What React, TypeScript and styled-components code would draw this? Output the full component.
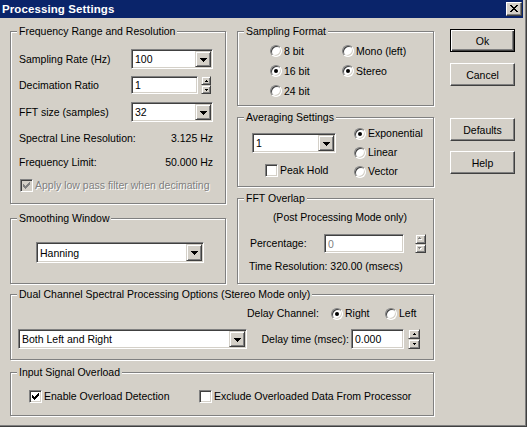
import React from "react";
import styled, { createGlobalStyle, css } from "styled-components";

const FACE = "#d4d0c8";
const SHADOW = "#808080";
const DARK = "#404040";
const LIGHT = "#ffffff";

const GlobalStyle = createGlobalStyle`
  html, body {
    margin: 0;
    padding: 0;
    background: ${FACE};
  }
  body {
    font-family: "Liberation Sans", Arial, sans-serif;
    font-size: 10.5px;
    color: #000;
  }
  * {
    box-sizing: border-box;
  }
`;

// classic bevels
const sunken = css`
  border: 1px solid;
  border-color: ${SHADOW} ${LIGHT} ${LIGHT} ${SHADOW};
  box-shadow: inset 1px 1px 0 ${DARK}, inset -1px -1px 0 ${FACE};
`;

const raised = css`
  border: 1px solid;
  border-color: ${FACE} ${DARK} ${DARK} ${FACE};
  box-shadow: inset 1px 1px 0 ${LIGHT}, inset -1px -1px 0 ${SHADOW};
`;

const Frame = styled.div`
  width: 527px;
  height: 427px;
  padding: 0 4px 4px 0;
  background: ${FACE};
  box-shadow: inset -1px -1px 0 ${DARK}, inset -2px -2px 0 ${SHADOW};
  overflow: hidden;
`;

const TitleBar = styled.div`
  height: 18px;
  background: #0a246a;
  color: #fff;
  display: flex;
  align-items: center;
  justify-content: space-between;
  padding: 0 1px 0 2px;
`;

const TitleText = styled.span`
  font-family: "Liberation Sans", Arial, sans-serif;
  font-weight: bold;
  font-size: 11.5px;
  letter-spacing: 0.1px;
`;

const CloseButton = styled.div`
  width: 16px;
  height: 14px;
  background: ${FACE};
  border: 1px solid;
  border-color: ${LIGHT} ${DARK} ${DARK} ${LIGHT};
  box-shadow: inset -1px -1px 0 ${SHADOW};
  display: flex;
  align-items: center;
  justify-content: center;
  padding: 0 1px 1px 0;
`;

const Body = styled.div`
  display: flex;
  gap: 16px;
  padding: 11px 0 0 10px;
`;

const GroupsArea = styled.div`
  width: 424px;
  display: flex;
  flex-direction: column;
  padding-top: 2px;
`;

const TopRow = styled.div`
  display: flex;
  gap: 11px;
`;

const Column = styled.div<{ $gap: number }>`
  display: flex;
  flex-direction: column;
  gap: ${(p) => p.$gap}px;
`;

const Group = styled.div<{ $w: number; $h: number; $mt?: number; $pad?: string }>`
  position: relative;
  width: ${(p) => p.$w}px;
  height: ${(p) => p.$h}px;
  margin-top: ${(p) => p.$mt ?? 0}px;
  padding: ${(p) => p.$pad ?? "0"};
  border: 1px solid ${SHADOW};
  box-shadow: inset 1px 1px 0 ${LIGHT}, 1px 1px 0 ${LIGHT};
`;

const Legend = styled.span`
  position: absolute;
  top: -7px;
  left: 6px;
  padding: 0 2px;
  line-height: 13px;
  background: ${FACE};
  white-space: nowrap;
`;

const FieldRow = styled.div<{ $mt: number }>`
  display: grid;
  grid-template-columns: 112px auto;
  align-items: center;
  margin-top: ${(p) => p.$mt}px;
`;

const Inline = styled.div<{ $gap?: number }>`
  display: flex;
  align-items: center;
  gap: ${(p) => p.$gap ?? 0}px;
`;

const ValueRow = styled.div<{ $mt: number }>`
  display: flex;
  justify-content: space-between;
  line-height: 14px;
  margin-top: ${(p) => p.$mt}px;
`;

const Spaced = styled.div<{ $mt?: number; $ml?: number }>`
  margin-top: ${(p) => p.$mt ?? 0}px;
  margin-left: ${(p) => p.$ml ?? 0}px;
`;

const Label = styled.span<{ $w?: number; $right?: boolean; $disabled?: boolean }>`
  white-space: nowrap;
  line-height: 13px;
  ${(p) => (p.$w ? `width: ${p.$w}px; flex: none;` : "")}
  ${(p) => (p.$right ? "text-align: right;" : "")}
  ${(p) =>
    p.$disabled ? `color: ${SHADOW}; text-shadow: 1px 1px 0 ${LIGHT};` : ""}
`;

/* ---------- pixel glyphs ---------- */

type Run = [number, number, number];

const Glyph: React.FC<{ runs: Run[]; w: number; h: number; color?: string; emboss?: boolean }> = ({
  runs,
  w,
  h,
  color = "#000",
  emboss,
}) => (
  <svg
    width={emboss ? w + 1 : w}
    height={emboss ? h + 1 : h}
    shapeRendering="crispEdges"
    style={{ display: "block" }}
  >
    {emboss &&
      runs.map(([x, y, len], i) => (
        <rect key={"s" + i} x={x + 1} y={y + 1} width={len} height={1} fill={LIGHT} />
      ))}
    {runs.map(([x, y, len], i) => (
      <rect key={i} x={x} y={y} width={len} height={1} fill={color} />
    ))}
  </svg>
);

const DOWN: Run[] = [
  [0, 0, 7],
  [1, 1, 5],
  [2, 2, 3],
  [3, 3, 1],
];
const SMALL_UP: Run[] = [
  [1, 0, 1],
  [0, 1, 3],
];
const SMALL_DOWN: Run[] = [
  [0, 0, 3],
  [1, 1, 1],
];
const CHECK: Run[] = [
  [6, 0, 1],
  [5, 1, 2],
  [0, 2, 1],
  [4, 2, 3],
  [0, 3, 2],
  [3, 3, 3],
  [0, 4, 5],
  [1, 5, 3],
  [2, 6, 1],
];
const CLOSE: Run[] = [
  [0, 0, 2],
  [6, 0, 2],
  [1, 1, 2],
  [5, 1, 2],
  [2, 2, 4],
  [3, 3, 2],
  [2, 4, 4],
  [1, 5, 2],
  [5, 5, 2],
  [0, 6, 2],
  [6, 6, 2],
];

/* ---------- controls ---------- */

const ComboFrame = styled.div<{ $w: number; $h: number }>`
  ${sunken};
  width: ${(p) => p.$w}px;
  height: ${(p) => p.$h}px;
  padding: 1px;
  background: #fff;
  display: flex;
  flex: none;
`;

const ComboText = styled.div`
  flex: 1;
  display: flex;
  align-items: center;
  padding-left: 2px;
  white-space: nowrap;
  overflow: hidden;
`;

const DropButton = styled.div`
  ${raised};
  width: 16px;
  background: ${FACE};
  display: flex;
  align-items: center;
  justify-content: center;
  padding-top: 1px;
`;

const ComboBox: React.FC<{ value: string; w: number; h?: number }> = ({ value, w, h = 20 }) => (
  <ComboFrame $w={w} $h={h}>
    <ComboText>{value}</ComboText>
    <DropButton>
      <Glyph runs={DOWN} w={7} h={4} />
    </DropButton>
  </ComboFrame>
);

const Edit = styled.div<{ $w: number; $h: number; $disabled?: boolean }>`
  ${sunken};
  width: ${(p) => p.$w}px;
  height: ${(p) => p.$h}px;
  flex: none;
  background: #fff;
  padding-left: 3px;
  display: flex;
  align-items: center;
  color: ${(p) => (p.$disabled ? SHADOW : "#000")};
`;

const SpinStack = styled.div<{ $w: number; $h: number; $ml: number }>`
  width: ${(p) => p.$w}px;
  height: ${(p) => p.$h}px;
  margin-left: ${(p) => p.$ml}px;
  display: flex;
  flex-direction: column;
  flex: none;
`;

const SpinHalf = styled.div`
  ${raised};
  flex: 1;
  background: ${FACE};
  display: flex;
  align-items: center;
  justify-content: center;
`;

const Spin: React.FC<{ w: number; h: number; ml: number; disabled?: boolean }> = ({ w, h, ml, disabled }) => (
  <SpinStack $w={w} $h={h} $ml={ml}>
    <SpinHalf>
      <Glyph runs={SMALL_UP} w={3} h={2} color={disabled ? SHADOW : "#000"} emboss={disabled} />
    </SpinHalf>
    <SpinHalf>
      <Glyph runs={SMALL_DOWN} w={3} h={2} color={disabled ? SHADOW : "#000"} emboss={disabled} />
    </SpinHalf>
  </SpinStack>
);

const Option = styled.div<{ $w?: number }>`
  display: flex;
  align-items: center;
  gap: 2px;
  white-space: nowrap;
  ${(p) => (p.$w ? `width: ${p.$w}px; flex: none;` : "")}
`;

const RadioCircle = styled.span<{ $checked: boolean }>`
  width: 12px;
  height: 12px;
  flex: none;
  border-radius: 50%;
  border: 1px solid;
  border-color: ${SHADOW} ${LIGHT} ${LIGHT} ${SHADOW};
  box-shadow: inset 1px 1px 0 ${DARK}, inset -1px -1px 0 ${FACE};
  background: #fff;
  display: flex;
  align-items: center;
  justify-content: center;

  &::after {
    content: "";
    display: ${(p) => (p.$checked ? "block" : "none")};
    width: 4px;
    height: 4px;
    border-radius: 50%;
    background: #000;
  }
`;

const Radio: React.FC<{ label: string; checked?: boolean; w?: number }> = ({ label, checked = false, w }) => (
  <Option $w={w}>
    <RadioCircle $checked={checked} />
    <Label>{label}</Label>
  </Option>
);

const CheckSquare = styled.span<{ $disabled?: boolean }>`
  ${sunken};
  width: 13px;
  height: 13px;
  flex: none;
  background: ${(p) => (p.$disabled ? FACE : "#fff")};
  display: flex;
  align-items: center;
  justify-content: center;
`;

const Check: React.FC<{ label: string; checked?: boolean; disabled?: boolean }> = ({
  label,
  checked,
  disabled,
}) => (
  <Option>
    <CheckSquare $disabled={disabled}>
      {checked && <Glyph runs={CHECK} w={7} h={7} color={disabled ? SHADOW : "#000"} />}
    </CheckSquare>
    <Label $disabled={disabled}>{label}</Label>
  </Option>
);

const PushButton = styled.button<{ $default?: boolean; $mt?: number }>`
  width: 65px;
  height: 23px;
  margin-top: ${(p) => p.$mt ?? 0}px;
  padding: 0;
  font: inherit;
  color: #000;
  background: ${FACE};
  ${(p) =>
    p.$default
      ? css`
          border: 1px solid #000;
          box-shadow: inset 1px 1px 0 ${LIGHT}, inset -1px -1px 0 ${DARK}, inset -2px -2px 0 ${SHADOW};
        `
      : css`
          border: 1px solid;
          border-color: ${LIGHT} ${DARK} ${DARK} ${LIGHT};
          box-shadow: inset -1px -1px 0 ${SHADOW};
        `}
`;

const ButtonColumn = styled.div`
  display: flex;
  flex-direction: column;
`;

/* ---------- group specific layouts ---------- */

const FormatGrid = styled.div`
  display: grid;
  grid-template-columns: 72px auto;
  grid-auto-rows: 20px;
  align-items: center;
`;

const AveragingBody = styled.div`
  display: flex;
  align-items: flex-start;
`;

const AvgLeft = styled.div`
  margin: 15px 0 0 14px;
  display: flex;
  flex-direction: column;
`;

const AvgRadios = styled.div`
  margin: 6px 0 0 18px;
  display: grid;
  grid-auto-rows: 19px;
  align-items: center;
`;

const Note = styled.div`
  margin-top: 12px;
  padding-left: 9px;
  text-align: center;
  line-height: 13px;
`;

const PercentRow = styled.div`
  display: grid;
  grid-template-columns: 74px auto auto;
  align-items: center;
  margin: 10px 0 0 12px;
`;

const TimeRow = styled.div`
  margin: 7px 0 0 11px;
  line-height: 13px;
`;

const DelayChannelRow = styled.div`
  display: flex;
  align-items: center;
  height: 13px;
  margin: 12px 0 0 236px;
`;

const DelayRow = styled.div`
  display: flex;
  align-items: center;
  margin: 9px 0 0 7px;
`;

const OverloadRow = styled.div`
  display: grid;
  grid-template-columns: 170px auto;
  margin: 17px 0 0 18px;
`;

export default function App() {
  return (
    <>
      <GlobalStyle />
      <Frame>
        <TitleBar>
          <TitleText>Processing Settings</TitleText>
          <CloseButton>
            <Glyph runs={CLOSE} w={8} h={7} />
          </CloseButton>
        </TitleBar>

        <Body>
          <GroupsArea>
            <TopRow>
              <Column $gap={14}>
                <Group $w={216} $h={173} $pad="0 12px 0 8px">
                  <Legend>Frequency Range and Resolution</Legend>
                  <FieldRow $mt={17}>
                    <Label>Sampling Rate (Hz)</Label>
                    <ComboBox value="100" w={82} />
                  </FieldRow>
                  <FieldRow $mt={7}>
                    <Label>Decimation Ratio</Label>
                    <Inline>
                      <Edit $w={67} $h={18}>1</Edit>
                      <Spin w={10} h={18} ml={3} />
                    </Inline>
                  </FieldRow>
                  <FieldRow $mt={8}>
                    <Label>FFT size (samples)</Label>
                    <ComboBox value="32" w={82} />
                  </FieldRow>
                  <ValueRow $mt={9}>
                    <span>Spectral Line Resolution:</span>
                    <span>3.125 Hz</span>
                  </ValueRow>
                  <ValueRow $mt={10}>
                    <span>Frequency Limit:</span>
                    <span>50.000 Hz</span>
                  </ValueRow>
                  <Spaced $mt={10} $ml={1}>
                    <Check label="Apply low pass filter when decimating" checked disabled />
                  </Spaced>
                </Group>

                <Group $w={216} $h={66} $pad="23px 0 0 25px">
                  <Legend>Smoothing Window</Legend>
                  <ComboBox value="Hanning" w={168} h={21} />
                </Group>
              </Column>

              <Column $gap={11}>
                <Group $w={197} $h={75} $pad="9px 0 0 32px">
                  <Legend>Sampling Format</Legend>
                  <FormatGrid>
                    <Radio label="8 bit" />
                    <Radio label="Mono (left)" />
                    <Radio label="16 bit" checked />
                    <Radio label="Stereo" checked />
                    <Radio label="24 bit" />
                  </FormatGrid>
                </Group>

                <Group $w={197} $h={70}>
                  <Legend>Averaging Settings</Legend>
                  <AveragingBody>
                    <AvgLeft>
                      <ComboBox value="1" w={84} />
                      <Spaced $mt={11} $ml={13}>
                        <Check label="Peak Hold" />
                      </Spaced>
                    </AvgLeft>
                    <AvgRadios>
                      <Radio label="Exponential" checked />
                      <Radio label="Linear" />
                      <Radio label="Vector" />
                    </AvgRadios>
                  </AveragingBody>
                </Group>

                <Group $w={197} $h={86}>
                  <Legend>FFT Overlap</Legend>
                  <Note>(Post Processing Mode only)</Note>
                  <PercentRow>
                    <Label>Percentage:</Label>
                    <Edit $w={80} $h={19} $disabled>
                      0
                    </Edit>
                    <Spin w={11} h={19} ml={3} disabled />
                  </PercentRow>
                  <TimeRow>Time Resolution: 320.00 (msecs)</TimeRow>
                </Group>
              </Column>
            </TopRow>

            <Group $w={424} $h={66} $mt={10}>
              <Legend>Dual Channel Spectral Processing Options (Stereo Mode only)</Legend>
              <DelayChannelRow>
                <Label $w={84}>Delay Channel:</Label>
                <Radio label="Right" checked w={54} />
                <Radio label="Left" />
              </DelayChannelRow>
              <DelayRow>
                <ComboBox value="Both Left and Right" w={229} />
                <Label $w={102} $right>
                  Delay time (msec):
                </Label>
                <Spaced $ml={2}>
                  <Edit $w={53} $h={20}>0.000</Edit>
                </Spaced>
                <Spin w={12} h={20} ml={4} />
              </DelayRow>
            </Group>

            <Group $w={424} $h={44} $mt={12}>
              <Legend>Input Signal Overload</Legend>
              <OverloadRow>
                <Check label="Enable Overload Detection" checked />
                <Check label="Exclude Overloaded Data From Processor" />
              </OverloadRow>
            </Group>
          </GroupsArea>

          <ButtonColumn>
            <PushButton $default>Ok</PushButton>
            <PushButton $mt={11}>Cancel</PushButton>
            <PushButton $mt={32}>Defaults</PushButton>
            <PushButton $mt={10}>Help</PushButton>
          </ButtonColumn>
        </Body>
      </Frame>
    </>
  );
}
